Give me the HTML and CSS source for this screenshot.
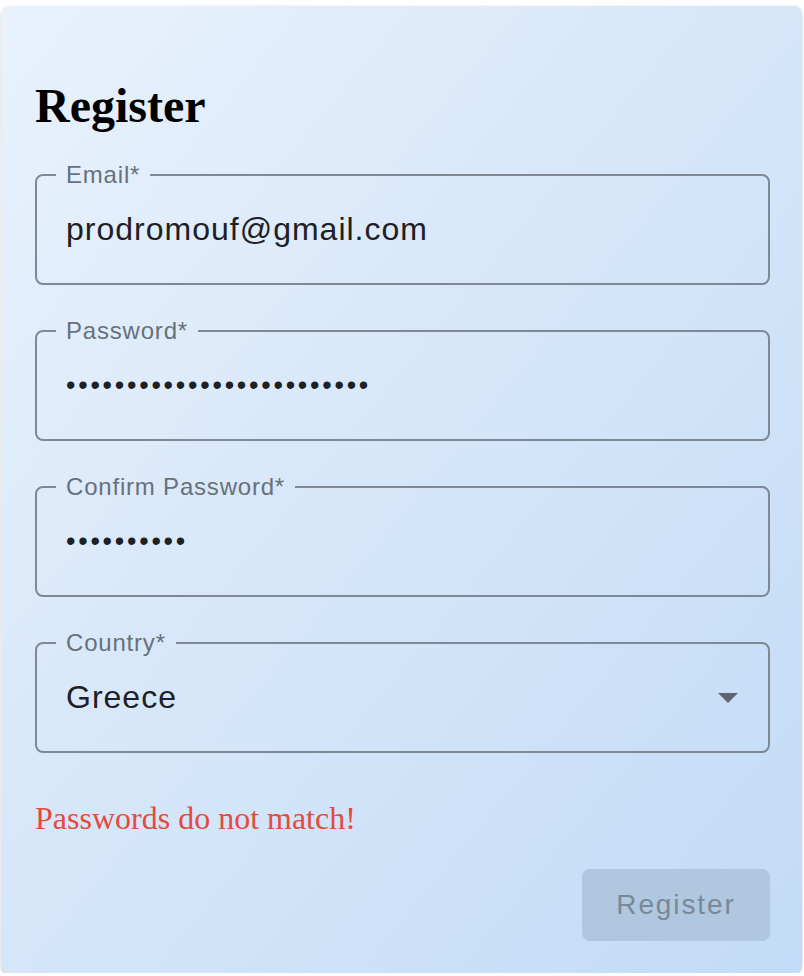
FILE: index.html
```html
<!DOCTYPE html>
<html lang="en">
<head>
<meta charset="utf-8">
<title>Register</title>
<link rel="stylesheet" href="styles.css">
</head>
<body>
<div class="card">
  <h1 class="title">Register</h1>
  <form class="form">
    <fieldset class="field">
      <legend class="label">Email*</legend>
      <div class="value">prodromouf@gmail.com</div>
    </fieldset>
    <fieldset class="field">
      <legend class="label">Password*</legend>
      <div class="value dots">•••••••••••••••••••••••••</div>
    </fieldset>
    <fieldset class="field">
      <legend class="label">Confirm Password*</legend>
      <div class="value dots">••••••••••</div>
    </fieldset>
    <fieldset class="field field-select">
      <legend class="label">Country*</legend>
      <div class="select-row">
        <div class="value">Greece</div>
        <svg class="arrow" viewBox="0 0 24 24" width="48" height="48" aria-hidden="true"><path d="M7 10l5 5 5-5z"/></svg>
      </div>
    </fieldset>
    <p class="error">Passwords do not match!</p>
    <div class="actions">
      <button type="button" class="btn" disabled>Register</button>
    </div>
  </form>
</div>
</body>
</html>
```
FILE: styles.css
```css
html, body {
  margin: 0;
  background: #ffffff;
}
body {
  padding: 6px 2px 0 1px;
  font-family: "Liberation Sans", Arial, sans-serif;
}
.card {
  width: 801px;
  box-sizing: border-box;
  height: 967px;
  padding: 72px 32px 32px 34px;
  border-radius: 8px;
  background: linear-gradient(to bottom right, #e9f2fc 0%, #d5e6f9 50%, #c2dbf6 100%);
  box-shadow: 0 2px 2px rgba(0,0,0,0.18), 0 0 2px rgba(0,0,0,0.12);
}
.title {
  margin: 0;
  font-family: "Liberation Serif", "Times New Roman", serif;
  font-weight: bold;
  font-size: 48px;
  line-height: 56px;
  color: #000;
}
.form {
  margin: 29px 0 0 0;
  display: flex;
  flex-direction: column;
  gap: 34px;
}
.field {
  margin: 0;
  padding: 0 0 31px 0;
  border: 2px solid #7e8995;
  border-radius: 8px;
  min-width: 0;
}
.label {
  margin-left: 19px;
  padding: 0 10px;
  font-size: 24px;
  line-height: 24px;
  letter-spacing: 0.8px;
  color: #67717c;
}
.value {
  padding: 19px 0 0 29px;
  font-size: 32px;
  line-height: 46px;
  letter-spacing: 1px;
  color: #1d2024;
  white-space: nowrap;
}
.dots {
  font-size: 27px;
  letter-spacing: 2.75px;
}
.select-row {
  display: flex;
  align-items: flex-end;
  justify-content: space-between;
}
.arrow {
  fill: #5d6670;
  margin-right: 16px;
  margin-bottom: -1px;
}
.error {
  margin: 11px 0 0 0;
  font-family: "Liberation Serif", "Times New Roman", serif;
  font-size: 32px;
  line-height: 40px;
  color: #e54b3b;
}
.actions {
  display: flex;
  justify-content: flex-end;
  margin-top: -3px;
}
.btn {
  height: 72px;
  width: 188px;
  border: none;
  border-radius: 8px;
  background: #b0c7e0;
  color: #7a8896;
  font-family: "Liberation Sans", Arial, sans-serif;
  font-size: 28px;
  letter-spacing: 1.9px;
  padding: 0;
}
```
